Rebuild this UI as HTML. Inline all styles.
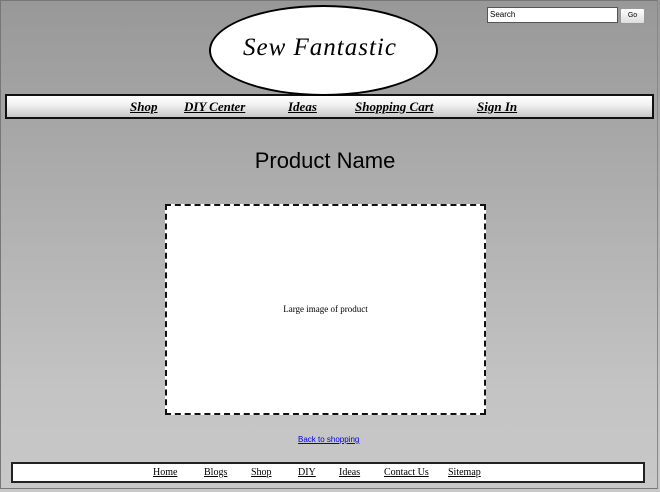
<!DOCTYPE html>
<html><head><style>
html,body{margin:0;padding:0}
body{width:660px;height:492px;position:relative;overflow:hidden;background:linear-gradient(#989898,#a6a6a6 25%,#c4c4c4 80%,#c8c8c8);font-family:"Liberation Sans",sans-serif}
.frame{position:absolute;left:0;top:0;width:656px;height:487px;border:1px solid #777;border-right-color:#888}
.ell{position:absolute;left:209px;top:5px;width:225px;height:87px;border:2px solid #000;border-radius:50%;background:#fff}
.ell span{position:absolute;left:32px;top:27px;font-family:"URW Chancery L","Z003","Liberation Serif",cursive;font-style:italic;font-size:25px;letter-spacing:1px}
.nav{position:absolute;left:5px;top:94px;width:645px;height:21px;border:2px solid #111;background:linear-gradient(#fff,#f2f2f2 40%,#c8c8c8)}
.nav a{position:absolute;top:3px;font-family:"Liberation Serif",serif;font-style:italic;font-weight:bold;font-size:13px;color:#000;text-decoration:underline}
.search{position:absolute;left:487px;top:7px;width:127px;height:14px;border:1px solid #555;background:#fff;font-size:8px;line-height:14px;padding-left:2px;box-sizing:content-box}
.go{position:absolute;left:620px;top:8px;width:23px;height:14px;border:1px solid #999;border-radius:2px;background:linear-gradient(#fff,#ddd);font-size:7px;text-align:center;line-height:14px}
h1{position:absolute;left:0;width:650px;top:148px;margin:0;text-align:center;font-weight:normal;font-size:22px}
.img{position:absolute;left:165px;top:204px;width:317px;height:207px;border:2px dashed #111;background:#fff;font-family:"Liberation Serif",serif;font-size:9px;text-align:center;line-height:207px}
.back{position:absolute;left:298px;top:435px;font-size:8px;color:#00e;text-decoration:underline}
.foot{position:absolute;left:11px;top:462px;width:630px;height:17px;border:2px solid #222;background:#fff}
.foot a{position:absolute;top:3px;font-family:"Liberation Serif",serif;font-size:10px;color:#000;text-decoration:underline}
</style></head><body>
<div class="frame"></div>
<div class="search">Search</div><div class="go">Go</div>
<div class="nav">
<a style="left:123px">Shop</a><a style="left:177px">DIY Center</a><a style="left:281px">Ideas</a><a style="left:348px">Shopping Cart</a><a style="left:470px">Sign In</a>
</div>
<div class="ell"><span>Sew Fantastic</span></div>
<h1>Product Name</h1>
<div class="img">Large image of product</div>
<div class="back">Back to shopping</div>
<div class="foot">
<a style="left:140px">Home</a><a style="left:191px">Blogs</a><a style="left:238px">Shop</a><a style="left:285px">DIY</a><a style="left:326px">Ideas</a><a style="left:371px">Contact Us</a><a style="left:435px">Sitemap</a>
</div>
</body></html>
